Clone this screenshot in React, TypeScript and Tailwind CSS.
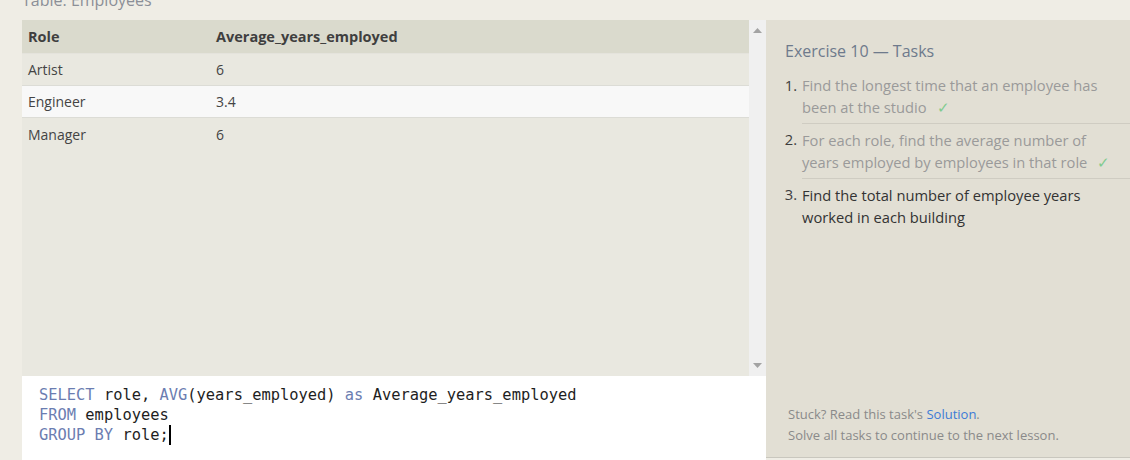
const rows = [
  { role: 'Artist', avg: '6', hl: false },
  { role: 'Engineer', avg: '3.4', hl: true },
  { role: 'Manager', avg: '6', hl: false },
];

const tasks = [
  { text: 'Find the longest time that an employee has been at the studio', done: true },
  { text: 'For each role, find the average number of years employed by employees in that role', done: true },
  { text: 'Find the total number of employee years worked in each building', done: false },
];

export default function App() {
  return (
    <div
      className="w-[1130px] h-[460px] overflow-hidden bg-[#efede5] flex flex-col"
      style={{ fontFamily: '"Open Sans", sans-serif' }}
    >
      {/* cut-off table label */}
      <div className="h-5 pl-[22px]">
        <p className="-mt-[10px] leading-5 text-[16px] text-[#8b8f97]">Table: Employees</p>
      </div>

      <div className="flex flex-1">
        {/* left: results + editor */}
        <div className="w-[766px] flex flex-col pl-[22px]">
          <div className="h-[356px] flex bg-[#e9e8e0]">
            <div className="flex-1">
              <div className="flex h-[34px] items-center bg-[#dadacd] border-b border-[#e4e3dc] text-[14.5px] font-bold text-[#3f3f3f]">
                <div className="w-[194px] pl-[6px]">Role</div>
                <div>Average_years_employed</div>
              </div>
              {rows.map((r, i) => (
                <div
                  key={r.role}
                  className={`flex h-[32px] items-center text-[14px] text-[#444] ${
                    i < rows.length - 1 ? 'border-b border-[#dcdcd6]' : ''
                  } ${r.hl ? 'bg-[#f8f8f8]' : ''}`}
                >
                  <div className="w-[194px] pl-[6px]">{r.role}</div>
                  <div>{r.avg}</div>
                </div>
              ))}
            </div>
            {/* scrollbar */}
            <div className="w-[17px] bg-[#f0f0f0] flex flex-col items-center justify-between py-[8px]">
              <svg width="9" height="5" viewBox="0 0 9 5">
                <path d="M0 5 L4.5 0 L9 5 Z" fill="#a3a3a3" />
              </svg>
              <svg width="9" height="5" viewBox="0 0 9 5">
                <path d="M0 0 L9 0 L4.5 5 Z" fill="#a3a3a3" />
              </svg>
            </div>
          </div>

          {/* editor */}
          <div
            className="flex-1 bg-white pl-[17px] pt-[9px] text-[15.4px] leading-5 text-[#1e1e1e]"
            style={{ fontFamily: '"DejaVu Sans Mono", monospace' }}
          >
            <div>
              <span className="text-[#6b7db1]">SELECT</span> role, <span className="text-[#6b7db1]">AVG</span>
              (years_employed) <span className="text-[#6b7db1]">as</span> Average_years_employed
            </div>
            <div>
              <span className="text-[#6b7db1]">FROM</span> employees
            </div>
            <div className="flex items-center">
              <span>
                <span className="text-[#6b7db1]">GROUP BY</span> role;
              </span>
              <span className="inline-block w-[2px] h-5 bg-black" />
            </div>
          </div>
        </div>

        {/* right: tasks */}
        <div className="w-[364px] h-[438px] bg-[#e2dfd4] border-b border-[#c9c7be] flex flex-col">
          <div className="pl-[19px] pt-[20px]">
            <h2 className="text-[16px] leading-[22px] text-[#6e7a8c]">Exercise 10 — Tasks</h2>
          </div>
          <ol className="mt-[7px] text-[14.7px] leading-[22px]">
            {tasks.map((t, i) => (
              <li key={i} className="flex">
                <span className="w-[36px] shrink-0 text-right pr-[5px] pt-[5px] text-[#3d3d3d]">{i + 1}.</span>
                <div className={`flex-1 ${i > 0 ? 'border-t border-[#cfccc2]' : ''}`}>
                  <div className={`py-[5px] pr-[12px] ${t.done ? 'text-[#9a9a9a]' : 'text-[#333]'}`}>
                    {t.text}
                    {t.done && <span className="ml-[10px] text-[#80cb8f]">✓</span>}
                  </div>
                </div>
              </li>
            ))}
          </ol>
          <div className="mt-auto pl-[22px] pb-[11px] text-[13px] leading-[21px] text-[#8a8a8a]">
            <p>
              Stuck? Read this task's <span className="text-[#3c7bd6]">Solution</span>.
            </p>
            <p>Solve all tasks to continue to the next lesson.</p>
          </div>
        </div>
      </div>
    </div>
  );
}
